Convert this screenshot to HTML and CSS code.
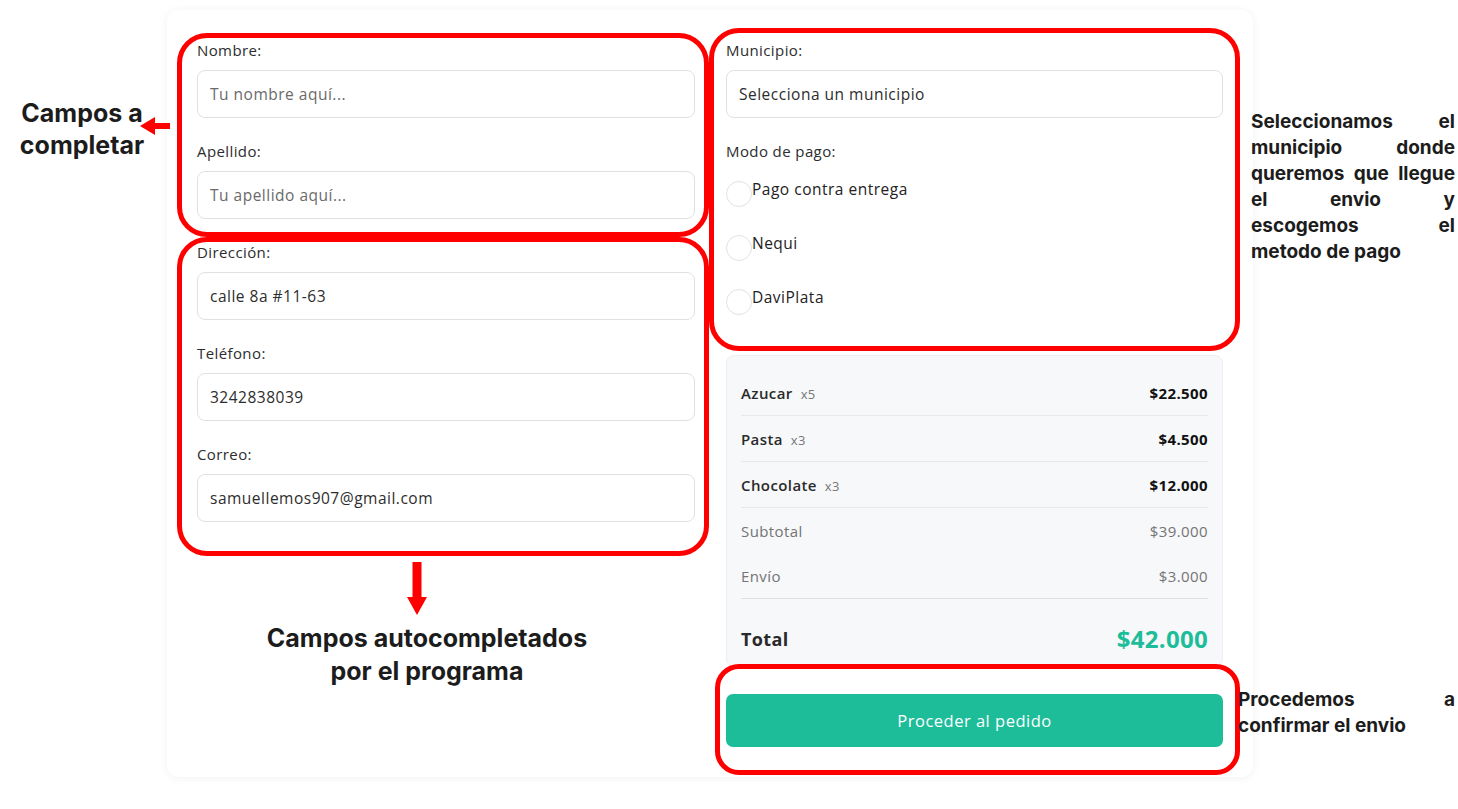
FILE: index.html
```html
<!DOCTYPE html>
<html lang="es">
<head>
<meta charset="utf-8">
<title>Checkout</title>
<link rel="stylesheet" href="styles.css">
</head>
<body>
<div class="stage">
  <div class="card">
    <div class="col">
      <div class="field">
        <label class="label">Nombre:</label>
        <input class="input" type="text" placeholder="Tu nombre aquí...">
      </div>
      <div class="field">
        <label class="label">Apellido:</label>
        <input class="input" type="text" placeholder="Tu apellido aquí...">
      </div>
      <div class="field">
        <label class="label">Dirección:</label>
        <input class="input" type="text" value="calle 8a #11-63">
      </div>
      <div class="field">
        <label class="label">Teléfono:</label>
        <input class="input" type="text" value="3242838039">
      </div>
      <div class="field">
        <label class="label">Correo:</label>
        <input class="input" type="text" value="samuellemos907@gmail.com">
      </div>
    </div>

    <div class="col">
      <div class="field">
        <label class="label">Municipio:</label>
        <select class="input select"><option>Selecciona un municipio</option></select>
      </div>
      <div class="field pay">
        <label class="label label-pay">Modo de pago:</label>
        <div class="radios">
          <label class="radio"><input type="radio" name="pago"><span>Pago contra entrega</span></label>
          <label class="radio"><input type="radio" name="pago"><span>Nequi</span></label>
          <label class="radio"><input type="radio" name="pago"><span>DaviPlata</span></label>
        </div>
      </div>

      <div class="summary">
        <div class="row item"><span class="name">Azucar<span class="qty">x5</span></span><span class="price">$22.500</span></div>
        <div class="row item"><span class="name">Pasta<span class="qty">x3</span></span><span class="price">$4.500</span></div>
        <div class="row item"><span class="name">Chocolate<span class="qty">x3</span></span><span class="price">$12.000</span></div>
        <div class="row sub"><span>Subtotal</span><span>$39.000</span></div>
        <div class="row sub ship"><span>Envío</span><span>$3.000</span></div>
        <div class="row total"><span class="total-label">Total</span><span class="total-value">$42.000</span></div>
      </div>

      <button class="btn" type="button">Proceder al pedido</button>
    </div>
  </div>

  <!-- annotations -->
  <div class="mark mark-1"></div>
  <div class="mark mark-2"></div>
  <div class="mark mark-3"></div>
  <div class="mark mark-4"></div>

  <svg class="arrow arrow-left" width="30" height="20" viewBox="0 0 30 20">
    <polygon points="0,10 15,1 15,19" fill="#ff0000"/>
    <rect x="14" y="7" width="16" height="6" fill="#ff0000"/>
  </svg>
  <svg class="arrow arrow-down" width="22" height="54" viewBox="0 0 22 54">
    <rect x="6.5" y="0" width="9" height="36" fill="#ff0000"/>
    <polygon points="1,35 21,35 11,53" fill="#ff0000"/>
  </svg>

  <div class="note note-left">Campos a<br>completar</div>
  <div class="note note-bottom">Campos autocompletados<br>por el programa</div>
  <div class="note note-right">
    <span class="j">Seleccionamos el</span>
    <span class="j">municipio donde</span>
    <span class="j">queremos que llegue</span>
    <span class="j">el envio y</span>
    <span class="j">escogemos el</span>
    <span>metodo de pago</span>
  </div>
  <div class="note note-btn">
    <span class="j">Procedemos a</span>
    <span>confirmar el envio</span>
  </div>
</div>
</body>
</html>
```
FILE: styles.css
```css
* { box-sizing: border-box; }

html, body {
  margin: 0;
  padding: 0;
  background: #ffffff;
}

body {
  font-family: "Open Sans", "DejaVu Sans", sans-serif;
  color: #2b2b2b;
}

.stage {
  position: relative;
  width: 1458px;
  height: 809px;
  overflow: hidden;
  padding-top: 10px;
}

.card {
  margin-left: 167px;
  width: 1086px;
  background: #ffffff;
  border-radius: 12px;
  box-shadow: 0 1px 10px rgba(0, 0, 0, 0.06);
  padding: 30px 30px 30px 30px;
  display: grid;
  grid-template-columns: 498px 497px;
  column-gap: 31px;
  align-items: start;
}

.col {
  display: flex;
  flex-direction: column;
}

.field {
  display: flex;
  flex-direction: column;
  margin-bottom: 23px;
}

.label {
  font-size: 15px;
  line-height: 20px;
  font-weight: 500;
  letter-spacing: 0.4px;
  color: #2d2d2d;
  margin-bottom: 10px;
}

.input {
  height: 48px;
  width: 100%;
  border: 1px solid #e1e1e1;
  border-radius: 8px;
  padding: 0 12px;
  font-family: "Open Sans", "DejaVu Sans", sans-serif;
  font-size: 15.5px;
  letter-spacing: 0.5px;
  color: #2d2d2d;
  background: #ffffff;
  outline: none;
}

.input::placeholder {
  color: #6a6a6a;
}

.select {
  appearance: none;
  -webkit-appearance: none;
}

.pay { margin-bottom: 0; }
.label-pay { margin-bottom: 18px; }

.radios {
  display: flex;
  flex-direction: column;
  gap: 26px;
}

.radio {
  display: flex;
  align-items: flex-start;
  height: 28px;
  font-size: 15.5px;
  letter-spacing: 0.5px;
  line-height: 20px;
  font-weight: 500;
  color: #222222;
}

.radio input {
  appearance: none;
  -webkit-appearance: none;
  width: 26px;
  height: 26px;
  margin: 2px 0 0 0;
  border: 1px solid #e2e2e2;
  border-radius: 50%;
  background: #ffffff;
  flex: none;
}

.summary {
  margin-top: 40px;
  background: #f7f8fa;
  border: 1px solid #eceef1;
  border-radius: 8px;
  padding: 14px 14px 12px 14px;
}

.row {
  display: flex;
  justify-content: space-between;
  align-items: center;
  height: 45px;
  font-size: 15px;
  letter-spacing: 0.4px;
}

.item {
  height: 46px;
  border-bottom: 1px solid #e6e8eb;
}

.name {
  font-weight: 600;
  color: #2a2a2a;
}

.qty {
  font-size: 13px;
  font-weight: 400;
  color: #777777;
  margin-left: 8px;
}

.price {
  font-weight: 700;
  color: #111111;
}

.sub {
  color: #747474;
}

.ship {
  height: 46px;
  border-bottom: 1px solid #dddfe2;
}

.total {
  height: auto;
  padding-top: 25px;
  line-height: 30px;
}

.total-label {
  font-size: 18px;
  font-weight: 700;
  color: #2a2a2a;
}

.total-value {
  font-size: 24px;
  letter-spacing: 0.3px;
  font-weight: 700;
  color: #1dbd9a;
}

.btn {
  margin-top: 27px;
  height: 53px;
  width: 100%;
  border: none;
  border-radius: 7px;
  background: #1dbd9a;
  color: #ffffff;
  font-family: "Open Sans", "DejaVu Sans", sans-serif;
  font-size: 16.5px;
  letter-spacing: 0.5px;
  font-weight: 400;
  cursor: pointer;
}

/* annotation overlays */
.mark {
  position: absolute;
  border: 5px solid #ff0000;
  border-radius: 30px;
  pointer-events: none;
}
.mark-1 { left: 177px; top: 33px; width: 532px; height: 204px; }
.mark-2 { left: 177px; top: 237px; width: 532px; height: 319px; }
.mark-3 { left: 709px; top: 28px; width: 531px; height: 323px; }
.mark-4 { left: 715px; top: 664px; width: 525px; height: 111px; border-radius: 24px; }

.arrow { position: absolute; }
.arrow-left { left: 140px; top: 116px; }
.arrow-down { left: 406px; top: 562px; }

.note {
  position: absolute;
  font-family: "Inter", "Liberation Sans", sans-serif;
  font-weight: 700;
  color: #1c1c1c;
}

.note-left {
  left: 2px;
  top: 97px;
  width: 160px;
  text-align: center;
  font-size: 25px;
  line-height: 32px;
}

.note-bottom {
  left: 217px;
  top: 622px;
  width: 420px;
  text-align: center;
  font-size: 25px;
  line-height: 33px;
}

.note-right {
  left: 1251px;
  top: 109px;
  width: 204px;
  font-size: 19px;
  line-height: 26px;
}

.note-btn {
  left: 1238px;
  top: 687px;
  width: 217px;
  font-size: 19px;
  line-height: 26px;
}

.note-right span,
.note-btn span {
  display: block;
  white-space: nowrap;
}

.note .j {
  text-align: justify;
  text-align-last: justify;
}
```
